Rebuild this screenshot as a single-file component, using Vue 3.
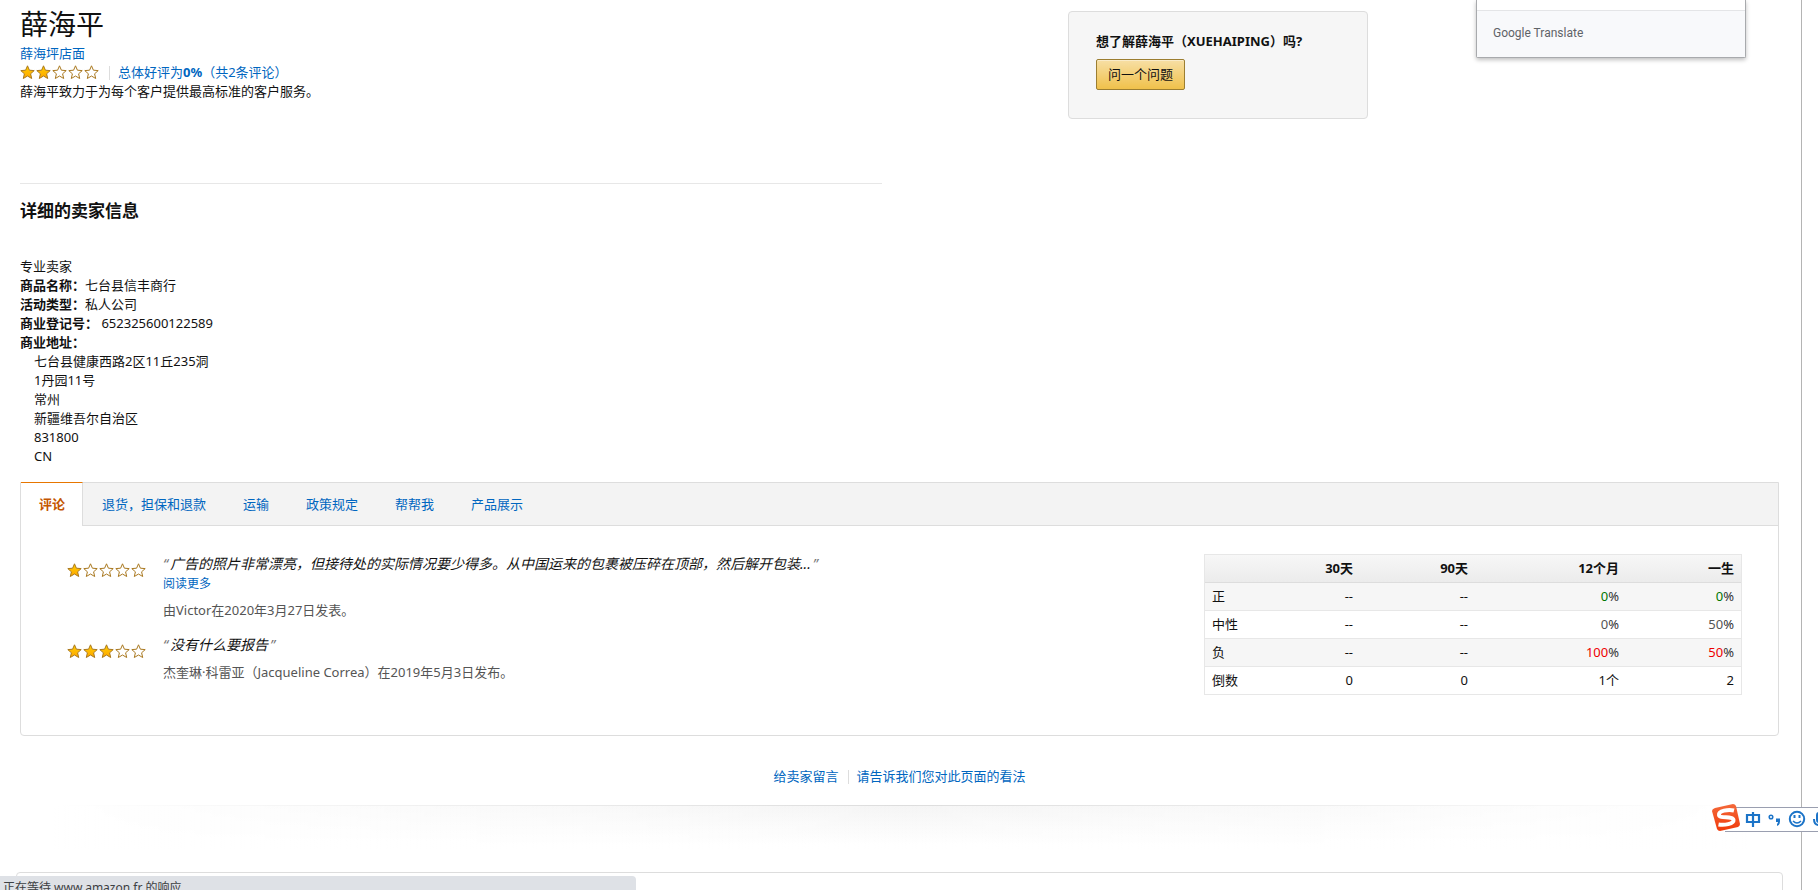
<script setup>
const tabs = ['评论', '退货，担保和退款', '运输', '政策规定', '帮帮我', '产品展示']

const reviews = [
  { stars: 1, text: '广告的照片非常漂亮，但接待处的实际情况要少得多。从中国运来的包裹被压碎在顶部，然后解开包装...', more: true, by: '由Victor在2020年3月27日发表。' },
  { stars: 3, text: '没有什么要报告', more: false, by: '杰奎琳·科雷亚（Jacqueline Correa）在2019年5月3日发布。' },
]

const address = ['七台县健康西路2区11丘235洞', '1丹园11号', '常州', '新疆维吾尔自治区', '831800', 'CN']

const heads = ['30天', '90天', '12个月', '一生']
const rows = [
  { label: '正', tone: 'good', cells: ['--', '--', '0%', '0%'] },
  { label: '中性', tone: 'neutral', cells: ['--', '--', '0%', '50%'] },
  { label: '负', tone: 'bad', cells: ['--', '--', '100%', '50%'] },
  { label: '倒数', tone: '', cells: ['0', '0', '1个', '2'] },
]
const isPercent = (c) => c.endsWith('%')
const starPath = 'M7.5 0.8 L9.4 5.2 L14.2 5.6 L10.6 8.8 L11.7 13.5 L7.5 11 L3.3 13.5 L4.4 8.8 L0.8 5.6 L5.6 5.2 Z'
</script>

<template>
  <div class="page">
    <svg class="defs" width="0" height="0" aria-hidden="true">
      <defs>
        <linearGradient id="star-fill" x1="0" y1="0" x2="0" y2="1">
          <stop offset="0" stop-color="#ffce00" />
          <stop offset="1" stop-color="#ffa700" />
        </linearGradient>
        <linearGradient id="logo-fill" x1="0" y1="0" x2="0" y2="1">
          <stop offset="0" stop-color="#f4693a" />
          <stop offset="1" stop-color="#f03a0a" />
        </linearGradient>
      </defs>
    </svg>

    <main class="content">
      <section class="top">
        <div class="seller">
          <h1>薛海平</h1>
          <div class="line"><a href="#">薛海坪店面</a></div>
          <div class="line rating">
            <svg class="stars" width="80" height="15" viewBox="0 0 80 15" role="img" aria-label="2/5">
              <path v-for="n in 5" :key="n" :d="starPath" :transform="`translate(${(n - 1) * 16} 0)`" :class="n <= 2 ? 'full' : 'empty'" />
            </svg>
            <span class="bar"></span>
            <a href="#">总体好评为<b>0%</b>（共2条评论）</a>
          </div>
          <div class="line">薛海平致力于为每个客户提供最高标准的客户服务。</div>
          <hr>
          <h2>详细的卖家信息</h2>
          <div class="details">
            <div>专业卖家</div>
            <div><b>商品名称：</b>七台县信丰商行</div>
            <div><b>活动类型：</b>私人公司</div>
            <div><b>商业登记号：</b>&nbsp;652325600122589</div>
            <div><b>商业地址：</b></div>
            <div v-for="a in address" :key="a" class="indent">{{ a }}</div>
          </div>
        </div>
        <aside class="ask">
          <b>想了解薛海平（XUEHAIPING）吗?</b>
          <button type="button">问一个问题</button>
        </aside>
      </section>

      <section class="panel">
        <nav class="tabs">
          <a v-for="(t, i) in tabs" :key="t" href="#" :class="{ active: i === 0 }">{{ t }}</a>
        </nav>
        <div class="body">
          <div class="reviews">
            <article v-for="r in reviews" :key="r.by" class="review">
              <svg class="stars" width="80" height="15" viewBox="0 0 80 15" role="img" :aria-label="`${r.stars}/5`">
                <path v-for="n in 5" :key="n" :d="starPath" :transform="`translate(${(n - 1) * 16} 0)`" :class="n <= r.stars ? 'full' : 'empty'" />
              </svg>
              <div>
                <div class="quote"><span>“</span><em>{{ r.text }}</em><span>”</span></div>
                <a v-if="r.more" href="#" class="more">阅读更多</a>
                <div class="by">{{ r.by }}</div>
              </div>
            </article>
          </div>
          <table>
            <colgroup><col class="c0"><col class="c1"><col class="c2"><col class="c3"><col class="c4"></colgroup>
            <thead>
              <tr><th></th><th v-for="h in heads" :key="h" scope="col">{{ h }}</th></tr>
            </thead>
            <tbody>
              <tr v-for="row in rows" :key="row.label">
                <th scope="row">{{ row.label }}</th>
                <td v-for="(c, i) in row.cells" :key="i">
                  <template v-if="isPercent(c)"><span :class="row.tone">{{ c.slice(0, -1) }}</span><span class="pct">%</span></template>
                  <template v-else>{{ c }}</template>
                </td>
              </tr>
            </tbody>
          </table>
        </div>
      </section>

      <div class="links">
        <a href="#">给卖家留言</a><span class="bar"></span><a href="#">请告诉我们您对此页面的看法</a>
      </div>
    </main>
    <div class="shade"></div>
    <div class="next"></div>
  </div>

  <div class="translate"><div>Google Translate</div></div>

  <div class="ime">
    <svg width="107" height="30" viewBox="0 0 107 30" role="img" aria-label="输入法">
      <path d="M14 4.500H107M14 28.500H107" stroke="#9a9fb0" fill="none" />
      <path d="M14 5H107V28H14Z" fill="#fff" />
      <path d="M4 5 L22 1 Q24 1 25 3 L29 21 Q29 23 27 24 L9 28 Q7 28 6 26 L1 8 Q1 6 4 5Z" fill="url(#logo-fill)" />
      <path d="M23 7.500C17 6 7.500 8 8 12C8.500 16 22 12.500 22.500 17C23 21 13 22.500 7.500 21.500" stroke="#fff" stroke-width="4" fill="none" />
      <g fill="none" stroke="#1c74c8" stroke-width="2">
        <path d="M36 12H48V19H36ZM42 9V24" stroke-width="2.200" />
        <circle cx="60" cy="14" r="1.800" stroke-width="1.500" />
        <circle cx="86" cy="16" r="7.200" />
        <path d="M82 18Q86 22 90 18" stroke-width="1.500" />
        <path d="M83.500 12V15M88.500 12V15" />
        <path d="M103 16Q103 22 108 22" />
      </g>
      <path d="M65 15.500H69V18.500Q69 22 66 23V21Q67 20 67 19H65Z" fill="#1c74c8" />
      <path d="M105 12Q105 9 108 9V20Q105 20 105 17Z" fill="#1c74c8" />
    </svg>
  </div>

  <div class="status">正在等待 www.amazon.fr 的响应</div>
</template>

<style>
html, body { margin: 0; background: #fff; overflow: hidden; }
</style>

<style scoped>
* { box-sizing: border-box; }
.page, .translate, .status {
  font-family: "Noto Sans", "Noto Sans CJK SC", sans-serif;
  font-size: 13px;
  line-height: 19px;
  color: #111;
}
.page {
  margin-right: 16px;
  border-right: 1px solid #b4b4b4;
  height: 100vh;
  overflow: hidden;
}
.defs { position: absolute; }
.content { padding: 6px 22px 0 20px; }
a { color: #0066c0; text-decoration: none; }
.top { display: flex; justify-content: space-between; }
.seller { width: 49%; }
h1 { margin: 0; font-size: 28px; line-height: 36px; font-weight: 400; padding-bottom: 2px; }
.line { height: 19px; }
.rating { display: flex; align-items: center; }
.stars { display: block; flex: none; }
.stars path { stroke: #a9781f; stroke-width: 1; }
.full { fill: url(#star-fill); }
.empty { fill: #fff; }
.bar { width: 1px; height: 14px; background: #ddd; margin: 0 8px 0 9px; }
hr { border: 0; border-top: 1px solid #e7e7e7; margin: 82px 0 15px; }
h2 { margin: 0; font-size: 17px; line-height: 24px; font-weight: 700; }
.details { margin-top: 34px; }
.indent { padding-left: 14px; }
.ask {
  width: 300px;
  height: 108px;
  margin: 5px 411px 0 0;
  padding: 20px 27px;
  background: #f6f6f6;
  border: 1px solid #ddd;
  border-radius: 4px;
}
.ask b { display: block; white-space: nowrap; }
button {
  display: block;
  margin-top: 8px;
  height: 31px;
  padding: 0 11px;
  font: inherit;
  color: #111;
  background: linear-gradient(#f7dfa5, #f0c14b);
  border: 1px solid #9c7e31;
  border-radius: 2px;
  box-shadow: inset 0 1px 0 rgba(255, 255, 255, 0.4);
}
.panel { margin-top: 16px; border: 1px solid #ddd; border-radius: 0 0 4px 4px; }
.tabs { display: flex; height: 43px; background: #f3f3f3; border-bottom: 1px solid #ddd; }
.tabs a { padding: 12px 18px 0 19px; }
.tabs .active {
  margin: -1px 0 -1px;
  padding: 12px 17px 0 18px;
  height: 44px;
  background: #fff;
  border-top: 1px solid #e77600;
  border-right: 1px solid #ddd;
  color: #c45500;
  font-weight: 700;
}
.body { display: flex; justify-content: space-between; padding: 28px 36px 38px 46px; }
.review { display: flex; gap: 16px; margin-bottom: 15px; }
.review .stars { margin-top: 9px; }
.quote { font-size: 14px; font-style: italic; line-height: 20px; white-space: nowrap; }
.quote span { color: #767676; }
.quote em { margin: 0 2px; }
.more { display: block; font-size: 12px; }
.by { margin-top: 8px; color: #555; }
table { width: 538px; table-layout: fixed; border-collapse: separate; border-spacing: 0; border: 1px solid #e7e7e7; border-bottom: 0; }
.c0 { width: 40px; }
.c1, .c2 { width: 115px; }
.c3 { width: 151px; }
.c4 { width: 115px; }
th, td { height: 28px; padding: 0 7px; text-align: right; font-weight: 400; border-bottom: 1px solid #e7e7e7; }
table { align-self: flex-start; }
thead tr { background: linear-gradient(#f7f7f7, #ebebeb); }
thead th { font-weight: 700; border-bottom-color: #ddd; }
tbody th { text-align: left; white-space: nowrap; padding: 0 0 0 7px; }
tbody tr:nth-child(odd) { background: #f6f6f6; }
.good { color: #007600; }
.neutral { color: #555; }
.bad { color: #e00; }
.pct { color: #333; }
.links { display: flex; justify-content: center; align-items: center; margin-top: 31px; }
.shade {
  height: 44px;
  margin-top: 19px;
  border-top: 1px solid #e7e7e7;
  background: linear-gradient(90deg, #fff 3%, rgba(255, 255, 255, 0) 50%, #fff 97%), linear-gradient(#f5f5f5, #fff 90%);
  border-image: linear-gradient(90deg, #fff 3%, #ddd 50%, #fff 97%) 1;
}
.next { height: 60px; margin: 23px 18px 0 16px; border: 1px solid #ddd; border-radius: 4px; }
.translate {
  position: absolute;
  top: 0;
  right: 72px;
  width: 270px;
  height: 58px;
  padding-top: 10px;
  background: #fff;
  border: 1px solid #a8aaad;
  border-top: 0;
  border-radius: 0 0 2px 2px;
  box-shadow: 0 2px 4px rgba(0, 0, 0, 0.25);
}
.translate div {
  height: 47px;
  padding: 13px 16px;
  background: #f8f9fb;
  border-top: 1px solid #e4e5e7;
  font: 12px/19px Roboto, sans-serif;
  color: #5f6368;
}
.ime { position: absolute; right: 0; top: 803px; line-height: 0; }
.status {
  position: absolute;
  left: 0;
  bottom: 0;
  width: 35%;
  height: 14px;
  padding: 2px 3px 0;
  overflow: hidden;
  background: #dee1e6;
  border-top-right-radius: 4px;
  font-size: 12px;
  color: #3c4043;
}
</style>
